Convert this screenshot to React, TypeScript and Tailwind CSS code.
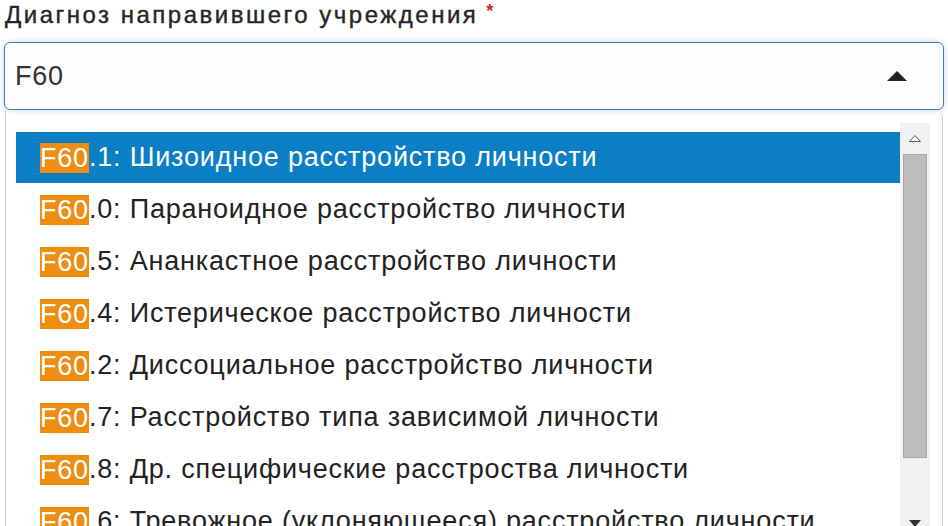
import React from "react";

const options = [
  { code: "1", label: "Шизоидное расстройство личности" },
  { code: "0", label: "Параноидное расстройство личности" },
  { code: "5", label: "Ананкастное расстройство личности" },
  { code: "4", label: "Истерическое расстройство личности" },
  { code: "2", label: "Диссоциальное расстройство личности" },
  { code: "7", label: "Расстройство типа зависимой личности" },
  { code: "8", label: "Др. специфические расстроства личности" },
  { code: "6", label: "Тревожное (уклоняющееся) расстройство личности" },
];

export default function App() {
  return (
    <div className="w-[948px] h-[526px] overflow-hidden bg-white text-[#222] font-['Liberation_Sans',Arial,sans-serif]">
      {/* Label */}
      <div className="h-[40px] pl-[5px] flex items-start">
        <span className="text-[24px] leading-[30px] text-[#262626] tracking-[2.5px] [-webkit-text-stroke:0.4px_#262626]">
          Диагноз направившего учреждения
        </span>
        <span className="text-[#c62828] text-[18px] leading-[16px] ml-[8px] mt-[3px] font-bold">*</span>
      </div>

      {/* Select input */}
      <div className="mx-[4px] w-[940px] h-[68px] mt-[2px] rounded-[6px] border border-[#4f79b5] bg-[#fdfdfd] shadow-[0_0_6px_rgba(100,170,230,0.45)] flex items-center pl-[10px] pr-[36px]">
        <span className="text-[27px] tracking-[0.8px] text-[#333] flex-1">F60</span>
        <svg width="20" height="10" viewBox="0 0 20 10">
          <polygon points="0,10 10,0 20,10" fill="#222" />
        </svg>
      </div>

      {/* Dropdown */}
      <div className="ml-[5px] w-[938px] h-[430px] border-l border-r border-[#cfcfcf] rounded-tr-[8px] flex pt-[13px]">
        <div className="flex-1 pl-[10px] pt-[9px]">
          {options.map((o, i) => (
            <div
              key={o.code}
              className={
                i === 0
                  ? "h-[51px] mb-[1px] bg-[#0b7fc5] text-white flex items-center pl-[24px] text-[27px] tracking-[0.8px] whitespace-nowrap"
                  : "h-[51px] mb-[1px] text-[#222] flex items-center pl-[24px] text-[27px] tracking-[0.8px] whitespace-nowrap"
              }
            >
              <span className="bg-[#ee8d10] text-white leading-[30px]">F60</span>
              <span>
                .{o.code}: {o.label}
              </span>
            </div>
          ))}
        </div>
        {/* Scrollbar */}
        <div className="w-[30px] mr-[12px] bg-[#f1f1f1] flex flex-col items-center">
          <div className="h-[31px] w-full flex items-center justify-center">
            <svg width="12" height="7" viewBox="0 0 12 7">
              <polygon points="0.5,6.5 6,0.5 11.5,6.5" fill="#fff" stroke="#555" strokeWidth="1" />
            </svg>
          </div>
          <div className="w-[24px] h-[304px] bg-[#bdbdbd] border border-[#a8a8a8]" />
          <div className="flex-1" />
          <div className="h-[28px] w-full flex items-start justify-center pt-[8px]">
            <svg width="12" height="7" viewBox="0 0 12 7">
              <polygon points="0,0 12,0 6,7" fill="#333" />
            </svg>
          </div>
        </div>
      </div>
    </div>
  );
}
